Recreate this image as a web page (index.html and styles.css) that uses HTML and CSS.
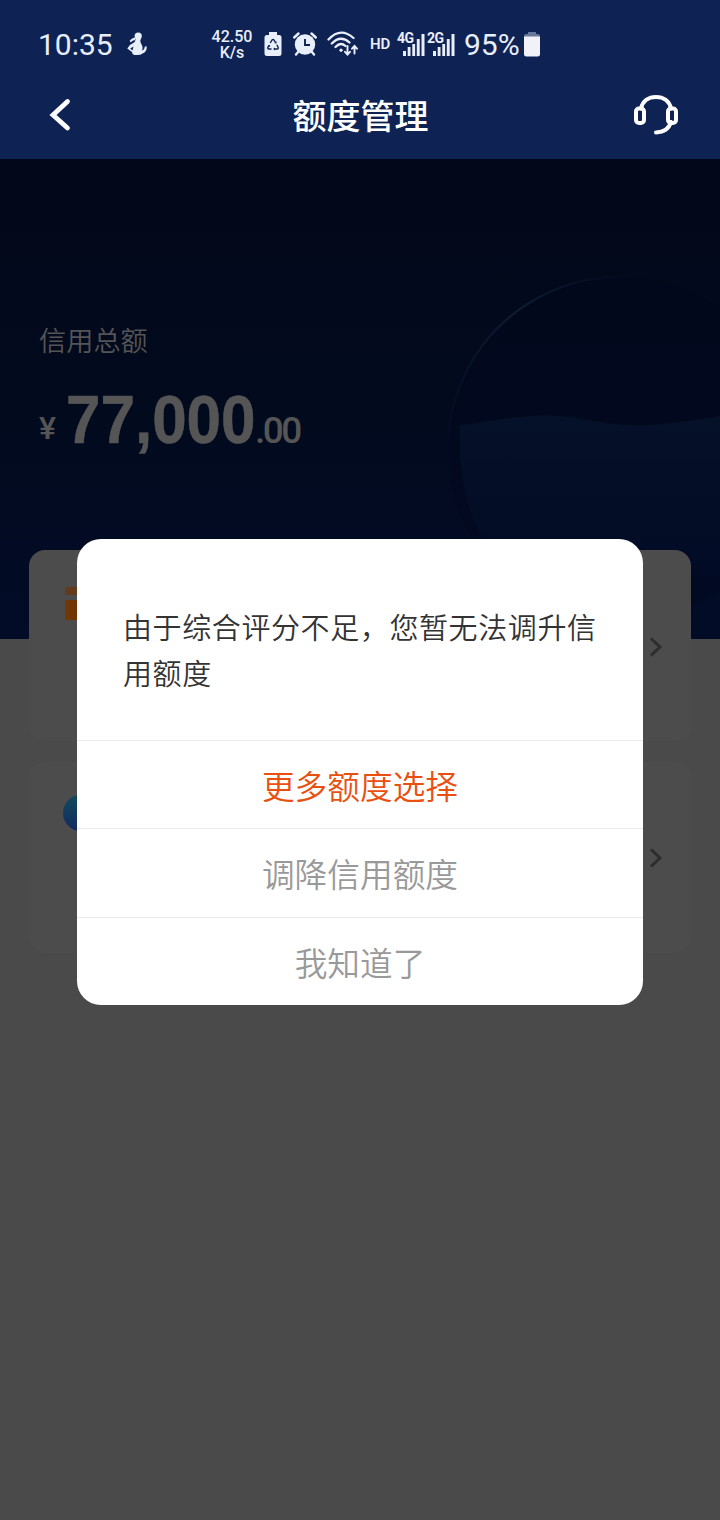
FILE: index.html
```html
<!DOCTYPE html>
<html lang="zh-CN">
<head>
<meta charset="utf-8">
<title>额度管理</title>
<link rel="stylesheet" href="styles.css">
</head>
<body>
<div class="screen">
  <header class="header">
    <div class="status">
      <span class="clock">10:35</span>
      <svg class="ic-figure" width="20" height="24" viewBox="0 0 20 24" fill="#e9eefb"><circle cx="11.200" cy="4" r="3.600"/><path d="M8.500 6.500H14Q12.500 9 14 11.500Q16.500 15 15 18.500Q17.500 18 17.800 14.500H19.800Q20 20 15.500 21.500Q13 23.500 9 23H7Q5 22 5 20L.3 16.500Q3 12 7 10.500Q9 9 8.500 6.500ZM3.200 16.500L5.500 18.500L6.500 14.500ZM8.500 5.500L9 8Q5.500 8 3.800 10.200L2.600 9Q5 5.500 8.500 5.500Z" fill-rule="evenodd"/></svg>
      <span class="speed"><span>42.50</span><span>K/s</span></span>
      <svg class="ic-saver" width="18" height="26" viewBox="0 0 18 26"><path d="M5 1h8v3h2q2.500 0 2.500 2.500v16q0 2.500-2.500 2.500H3Q.5 25 .5 22.500v-16Q.5 4 3 4h2z" fill="#e9eefb"/><path d="M6.200 12l1.900-3q.9-1.200 1.800 0l1.500 2.400M12.800 13.800l1.300 2.500q.6 1.700-1.100 1.700h-2.500M7.500 18H5q-1.700 0-1.100-1.700L5 14.300" fill="none" stroke="#0e2354" stroke-width="1.400"/><path d="M10.300 12.300l2.300.2v-2.300zM11 16.500v3l-1.900-1.500zM4 14.800l1.900-1 .3 2.100z" fill="#0e2354"/></svg>
      <svg class="ic-alarm" width="24" height="24" viewBox="0 0 24 24"><circle cx="12" cy="12.500" r="10.200" fill="#e9eefb"/><path d="M5.500 19.500l-2.500 3M18.500 19.500l2.500 3M1.200 5.500l4.300-4M22.800 5.500l-4.300-4" stroke="#e9eefb" stroke-width="2.400" stroke-linecap="round"/><path d="M12 7v6h5" fill="none" stroke="#0e2354" stroke-width="1.900"/></svg>
      <svg class="ic-wifi" width="32" height="26" viewBox="0 0 32 26" fill="none" stroke="#e9eefb" stroke-width="2.300" stroke-linecap="round"><path d="M1.500 8.500Q13.500-4.500 26.500 7M4.800 12.500Q13.500 3.500 22.500 11.500M8.500 16Q13.500 10.500 18.500 15"/><circle cx="14" cy="19.200" r="1.200" fill="#e9eefb" stroke-width="1"/><path d="M20.500 15v8M18 20.800l2.500 2.700 2.500-2.700M27.500 22.500v-7.500M25 17.700l2.500-2.700 2.500 2.700" stroke-width="1.900"/></svg>
      <span class="hd">HD</span>
      <span class="signal"><span class="net">4G</span><svg width="22" height="23" viewBox="0 0 22 23" fill="#e9eefb"><path d="M0 18h3v5H0zM4.700 14h2.800v9H4.700zM9.300 11h2.800v12H9.300zM13.800 6h2.900v17h-2.900zM18.500 1h3v22h-3z"/></svg></span>
      <span class="signal signal-2"><span class="net">2G</span><svg width="22" height="23" viewBox="0 0 22 23" fill="#e9eefb"><path d="M0 18h3v5H0zM4.700 14h2.800v9H4.700zM9.300 11h2.800v12H9.300zM13.800 6h2.900v17h-2.900zM18.500 1h3v22h-3z"/></svg></span>
      <span class="percent">95%</span>
      <svg class="ic-battery" width="16" height="25" viewBox="0 0 16 25"><path d="M4 0h8v2h2q2 0 2 3H0q0-3 2-3h2z" fill="#68769c"/><path d="M0 4.500h16V22q0 2.500-2.500 2.500h-11Q0 24.500 0 22z" fill="#f1f2f7"/></svg>
    </div>
    <nav class="nav">
      <svg class="back" width="24" height="36" viewBox="0 0 24 36"><path d="M20.500 4.500L6 18L20.500 31" fill="none" stroke="#fff" stroke-width="4.800" stroke-linecap="round"/></svg>
      <h1 class="title">额度管理</h1>
      <svg class="support" width="46" height="44" viewBox="0 0 46 44" fill="none" stroke="#fff" stroke-width="4" stroke-linecap="round"><path d="M8 14.500C9.500 7 15.500 2.900 23 2.900S36.500 7 38 14.500M38 28Q35 38 23 38.500"/><rect x="3" y="14.500" width="8" height="14.500" rx="3"/><rect x="35" y="14.500" width="8" height="14.500" rx="3"/></svg>
    </nav>
  </header>
  <main class="content">
    <section class="hero">
      <div class="summary">
        <div class="label">信用总额</div>
        <div class="amount"><span class="yen">¥</span><span class="whole">77,000</span><span class="cents">.00</span></div>
      </div>
      <svg class="orb" width="272" height="364" viewBox="0 0 272 364">
        <defs>
          <linearGradient id="ring" x1="0" y1="1" x2="1" y2="0"><stop offset="0" stop-color="#081634" stop-opacity="0"/><stop offset=".55" stop-color="#0b1d35"/><stop offset=".85" stop-color="#0b1d35" stop-opacity="0"/></linearGradient>
          <linearGradient id="water" x1="0" y1="0" x2="0" y2="1"><stop offset="0" stop-color="#051128"/><stop offset="1" stop-color="#020b25"/></linearGradient>
        </defs>
        <circle cx="172" cy="174" r="172" fill="#02081f" fill-opacity=".3"/>
        <path d="M2 200A172 172 0 0 1 272 34" fill="none" stroke="url(#ring)" stroke-width="2"/>
        <path d="M12 150C50 146 90 134 140 145C180 154 220 150 272 141V300H64Q8 250 12 150z" fill="url(#water)"/>
      </svg>
    </section>
    <section class="cards">
      <div class="card">
        <svg class="card-icon" width="36" height="36" viewBox="0 0 36 36"><defs><linearGradient id="box"><stop offset="0" stop-color="#713905"/><stop offset="1" stop-color="#6c2c00"/></linearGradient></defs><path d="M2 1h32v8H2z" fill="#633b1b"/><path d="M2 14h32v20H2z" fill="url(#box)"/></svg>
        <svg class="arrow" width="14" height="22" viewBox="0 0 14 22"><path d="M2 2.500L11 11L2 19.500" fill="none" stroke="#2d2d2d" stroke-width="3"/></svg>
      </div>
      <div class="card">
        <svg class="card-icon" width="36" height="38" viewBox="0 0 36 38"><defs><linearGradient id="ball" x2="0" y2="1"><stop offset="0" stop-color="#144a5c"/><stop offset="1" stop-color="#102a61"/></linearGradient></defs><circle cx="18.500" cy="19" r="18.500" fill="url(#ball)"/></svg>
        <svg class="arrow" width="14" height="22" viewBox="0 0 14 22"><path d="M2 2.500L11 11L2 19.500" fill="none" stroke="#2d2d2d" stroke-width="3"/></svg>
      </div>
    </section>
  </main>
  <div class="dialog" role="dialog">
    <p class="message">由于综合评分不足，您暂无法调升信用额度</p>
    <button class="action primary">更多额度选择</button>
    <button class="action">调降信用额度</button>
    <button class="action">我知道了</button>
  </div>
</div>
</body>
</html>
```
FILE: styles.css
```css
* { box-sizing: border-box; }
body {
  margin: 0;
  font-family: Roboto, "Noto Sans CJK SC", sans-serif;
}
.screen {
  position: relative;
  width: 720px;
  height: 1520px;
  overflow: hidden;
  background: #4a4a4a;
}
svg { display: block; flex: none; }
.header {
  height: 159px;
  background: #0e2354;
  color: #fff;
}
.status {
  display: flex;
  align-items: flex-start;
  height: 74px;
  padding: 31px 0 0 38px;
  color: #e9eefb;
  white-space: nowrap;
}
.status > * { flex: none; }
.clock {
  width: 89px;
  font-size: 30px;
  line-height: 28px;
}
.ic-figure { margin-top: 1px; }
.speed {
  display: flex;
  flex-direction: column;
  align-items: center;
  width: 42px;
  margin: -2px 0 0 64px;
  font-size: 16px;
  line-height: 16px;
  font-weight: 500;
}
.ic-saver { margin-left: 11px; }
.ic-alarm { margin: 1px 0 0 11px; }
.ic-wifi { margin: 0 0 0 10px; }
.hd {
  width: 27px;
  margin-left: 11px;
  font-size: 15px;
  line-height: 26px;
  font-weight: 600;
}
.signal {
  display: flex;
  width: 28px;
  height: 26px;
}
.signal svg { margin: 2px 0 0 -15px; }
.net {
  width: 21px;
  font-size: 14px;
  line-height: 14px;
  font-weight: 700;
  letter-spacing: -0.5px;
}
.signal-2 { margin-left: 2px; }
.percent {
  width: 60px;
  margin-left: 9px;
  font-size: 30px;
  line-height: 27px;
}
.ic-battery { margin-top: 1px; }
.nav {
  display: flex;
  align-items: flex-start;
  justify-content: space-between;
  height: 85px;
  padding: 22px 41px 0 47px;
}
.title {
  margin: -5px 0 0 17px;
  font-family: "Noto Sans CJK SC", sans-serif;
  font-size: 34px;
  line-height: 48px;
  font-weight: 500;
}
.back { margin-top: 1px; }
.support { margin-top: -2px; }
.hero {
  display: flex;
  justify-content: space-between;
  height: 480px;
  background: linear-gradient(#020819, #020a1e 55%, #020c27);
}
.summary {
  padding: 161px 0 0 39px;
  color: #555556;
  white-space: nowrap;
}
.label {
  font-family: "Noto Sans CJK SC", sans-serif;
  font-size: 27.2px;
  line-height: 38px;
  font-weight: 350;
}
.amount {
  display: flex;
  align-items: baseline;
  margin-top: 22px;
  line-height: 80px;
}
.yen {
  width: 27px;
  font-size: 32px;
  font-weight: 500;
  transform: translateY(-4px);
}
.whole {
  width: 189px;
  font-family: "Liberation Sans", sans-serif;
  font-size: 69px;
  font-weight: 700;
  -webkit-text-stroke: 0.6px #555556;
  transform: scaleX(0.898);
  transform-origin: left;
}
.cents {
  font-size: 37px;
  font-weight: 500;
  letter-spacing: -2.5px;
}
.orb { margin-top: 116px; }
.cards {
  display: flex;
  flex-direction: column;
  gap: 21px;
  margin: -89px 29px 0;
}
.card {
  display: flex;
  align-items: flex-start;
  justify-content: space-between;
  height: 191px;
  padding: 36px 28px 0 34px;
  border-radius: 16px;
  background: #4c4c4c;
}
.card + .card { padding-top: 32px; }
.arrow { margin-top: 50px; }
.card + .card .arrow { margin-top: 53px; }
.dialog {
  position: absolute;
  top: 539px;
  left: 77px;
  width: 566px;
  height: 466px;
  border-radius: 24px;
  overflow: hidden;
  background: #fff;
  font-family: "Noto Sans CJK SC", sans-serif;
}
.message {
  height: 201px;
  margin: 0;
  padding: 64px 45px 0 46px;
  color: #333;
  font-size: 29px;
  letter-spacing: 0.6px;
  line-height: 46px;
  font-weight: 350;
}
.action {
  display: block;
  width: 100%;
  height: 88.3px;
  padding: 0;
  border: 0;
  border-top: 1px solid #ebebeb;
  background: transparent;
  color: #999;
  font: 350 32.700px/88px "Noto Sans CJK SC", sans-serif;
}
.primary { color: #e9500f; }
```
